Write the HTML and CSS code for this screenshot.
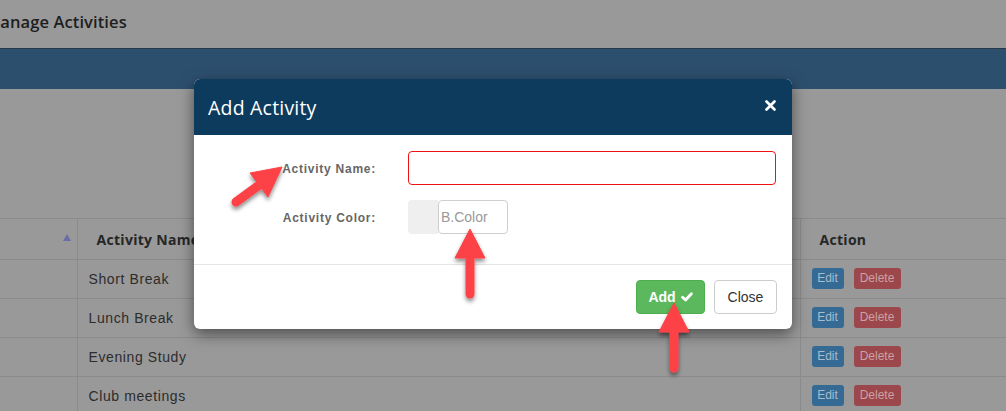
FILE: index.html
```html
<!DOCTYPE html>
<html lang="en">
<head>
<meta charset="utf-8">
<title>Manage Activities</title>
<link rel="stylesheet" href="styles.css">
</head>
<body>
<div class="page">
  <header class="topbar"><h1 class="page-title">Manage Activities</h1></header>
  <div class="bluebar"></div>
  <div class="content">
    <table class="grid">
      <colgroup><col class="c-idx"><col class="c-name"><col class="c-act"></colgroup>
      <thead>
        <tr>
          <th><div class="sort"><span class="sort-up"></span></div></th>
          <th>Activity Name</th>
          <th>Action</th>
        </tr>
      </thead>
      <tbody>
        <tr><td></td><td>Short Break</td><td><span class="btn-edit">Edit</span><span class="btn-del">Delete</span></td></tr>
        <tr><td></td><td>Lunch Break</td><td><span class="btn-edit">Edit</span><span class="btn-del">Delete</span></td></tr>
        <tr><td></td><td>Evening Study</td><td><span class="btn-edit">Edit</span><span class="btn-del">Delete</span></td></tr>
        <tr><td></td><td>Club meetings</td><td><span class="btn-edit">Edit</span><span class="btn-del">Delete</span></td></tr>
      </tbody>
    </table>
  </div>
</div>

<div class="modal">
  <div class="modal-header">
    <h4 class="modal-title">Add Activity</h4>
    <svg class="close" width="11" height="11" viewBox="0 0 11 11"><path d="M1.5 1.5 L9.5 9.5 M9.5 1.5 L1.5 9.5" stroke="#fff" stroke-width="2.6" stroke-linecap="round"/></svg>
  </div>
  <div class="modal-body">
    <label class="lbl">Activity Name:</label>
    <div class="field"><input class="name-input" type="text"></div>
    <label class="lbl">Activity Color:</label>
    <div class="field color-field">
      <span class="swatch"></span>
      <input class="color-input" type="text" placeholder="B.Color">
    </div>
  </div>
  <div class="modal-footer">
    <button class="btn-add">Add <svg width="12" height="10" viewBox="0 0 12 10"><path d="M1.6 5.2 L4.6 8 L10.4 1.8" fill="none" stroke="#fff" stroke-width="2.8" stroke-linecap="round" stroke-linejoin="round"/></svg></button>
    <button class="btn-close">Close</button>
  </div>
</div>

<svg class="arrows" width="1006" height="411" viewBox="0 0 1006 411">
  <defs>
    <filter id="sh" x="-50%" y="-50%" width="200%" height="200%">
      <feDropShadow dx="0" dy="3" stdDeviation="2" flood-color="#000" flood-opacity="0.45"/>
    </filter>
  </defs>
  <g filter="url(#sh)" fill="#fd4246" stroke="#fd4246">
    <path d="M236 202 L262 183" stroke-width="9" stroke-linecap="round" fill="none"/>
    <path d="M282 167 L250 173 L268 197 Z" stroke-width="1" stroke-linejoin="round"/>
    <path d="M470 257 L470 294" stroke-width="9" stroke-linecap="round" fill="none"/>
    <path d="M470 229 L455 258 L485 258 Z" stroke-width="1" stroke-linejoin="round"/>
    <path d="M674 331 L674 368" stroke-width="9" stroke-linecap="round" fill="none"/>
    <path d="M674 303 L659 332 L689 332 Z" stroke-width="1" stroke-linejoin="round"/>
  </g>
</svg>
</body>
</html>
```

FILE: styles.css
```css
* { box-sizing: border-box; }

html, body {
  margin: 0;
  padding: 0;
}

body {
  width: 1006px;
  height: 411px;
  overflow: hidden;
  position: relative;
  background: #999999;
  font-family: "Liberation Sans", Arial, sans-serif;
}

.topbar {
  height: 49px;
  border-bottom: 1px solid #26394b;
  display: flex;
  align-items: center;
  overflow: hidden;
}

.page-title {
  margin: -5px 0 0 -15px;
  font: 600 16.5px "Open Sans", sans-serif;
  color: #1e1e1e;
  letter-spacing: 0.1px;
}

.bluebar {
  height: 40px;
  background: #2d4f6e;
}

.content {
  padding-top: 129px;
}

.grid {
  width: 1006px;
  border-collapse: collapse;
  table-layout: fixed;
}

.c-idx { width: 77px; }
.c-name { width: 723px; }
.c-act { width: 206px; }

.grid th,
.grid td {
  border: 1px solid #8b8b8b;
  border-left: none;
  text-align: left;
  vertical-align: middle;
}

.grid td + td,
.grid th + th {
  border-left: 1px solid #8b8b8b;
}

.grid th {
  height: 41px;
  padding: 0 19px;
  font: 700 14px "Open Sans", sans-serif;
  color: #262626;
  letter-spacing: 0.3px;
}

.grid th:first-child {
  padding: 0 6px 0 0;
}

.sort {
  display: flex;
  justify-content: flex-end;
  margin-top: -4px;
}

.sort-up {
  width: 0;
  height: 0;
  border-left: 4px solid transparent;
  border-right: 4px solid transparent;
  border-bottom: 7px solid #6a6ea6;
}

.grid td {
  height: 39px;
  padding: 0 11px;
  font-size: 14px;
  color: #2c2c2c;
  letter-spacing: 0.6px;
}

.btn-edit,
.btn-del {
  display: inline-block;
  height: 21px;
  line-height: 21px;
  font-size: 12px;
  border-radius: 3px;
  letter-spacing: 0;
  vertical-align: middle;
  margin-top: -1px;
}

.btn-edit {
  width: 32px;
  text-align: center;
  background: #346a93;
  color: #a8bccd;
  margin-right: 10px;
}

.btn-del {
  width: 47px;
  text-align: center;
  background: #9b474b;
  color: #caa2a3;
}

/* modal */
.modal {
  position: absolute;
  left: 194px;
  top: 79px;
  width: 598px;
  background: #fff;
  border-radius: 6px;
  overflow: hidden;
  box-shadow: 0 5px 15px rgba(0, 0, 0, 0.5);
}

.modal-header {
  height: 56px;
  background: #0d3b5e;
  display: flex;
  align-items: center;
  justify-content: space-between;
  padding: 0 16px 0 14px;
}

.modal-title {
  margin: 0;
  font: 400 19.5px "Open Sans", sans-serif;
  color: #fff;
  letter-spacing: 0.2px;
}

.close {
  display: block;
  margin-top: -4px;
}

.modal-body {
  display: grid;
  grid-template-columns: 182px 1fr;
  column-gap: 32px;
  row-gap: 15px;
  padding: 16px 16px 30px 0;
  border-bottom: 1px solid #e5e5e5;
}

.lbl {
  text-align: right;
  align-self: center;
  margin-top: 2px;
  font-weight: 700;
  font-size: 12px;
  color: #666;
  letter-spacing: 0.75px;
}

.field {
  height: 34px;
}

.name-input {
  display: block;
  width: 100%;
  height: 34px;
  border: 1px solid #ee1111;
  border-radius: 4px;
  outline: none;
  background: #fff;
}

.color-field {
  display: flex;
}

.swatch {
  width: 30px;
  height: 34px;
  background: #efefef;
  border-radius: 4px 0 0 4px;
}

.color-input {
  width: 70px;
  height: 34px;
  border: 1px solid #cfcfcf;
  border-radius: 4px;
  padding: 0 2px;
  font: 14px "Liberation Sans", Arial, sans-serif;
  outline: none;
}

.color-input::placeholder {
  color: #9a9a9a;
}

.modal-footer {
  display: flex;
  justify-content: flex-end;
  gap: 9px;
  padding: 15px 15px 15px 0;
}

.btn-add,
.btn-close {
  height: 34px;
  border-radius: 4px;
  font: 14px "Liberation Sans", Arial, sans-serif;
  cursor: pointer;
}

.btn-add {
  width: 69px;
  background: #5cb85c;
  border: 1px solid #4cae4c;
  color: #fff;
  font-weight: 700;
  display: flex;
  align-items: center;
  justify-content: center;
  gap: 5px;
  padding: 0;
}

.btn-close {
  width: 63px;
  background: #fff;
  border: 1px solid #cccccc;
  color: #333;
}

.arrows {
  position: absolute;
  left: 0;
  top: 0;
  pointer-events: none;
}
```
